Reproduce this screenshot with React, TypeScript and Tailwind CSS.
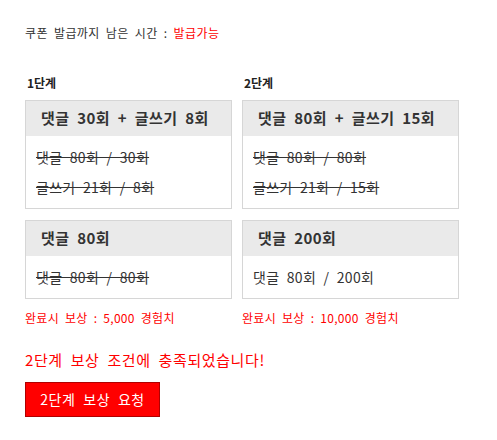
import React from 'react';

type Step = {
  label: string;
  reward: string;
  width: string;
  tasks: { title: string; lines: { text: string; done: boolean }[] }[];
};

const steps: Step[] = [
  {
    label: '1단계',
    reward: '완료시 보상 : 5,000 경험치',
    width: 'w-[207px]',
    tasks: [
      {
        title: '댓글 30회 + 글쓰기 8회',
        lines: [
          { text: '댓글 80회 / 30회', done: true },
          { text: '글쓰기 21회 / 8회', done: true },
        ],
      },
      {
        title: '댓글 80회',
        lines: [{ text: '댓글 80회 / 80회', done: true }],
      },
    ],
  },
  {
    label: '2단계',
    reward: '완료시 보상 : 10,000 경험치',
    width: 'w-[217px]',
    tasks: [
      {
        title: '댓글 80회 + 글쓰기 15회',
        lines: [
          { text: '댓글 80회 / 80회', done: true },
          { text: '글쓰기 21회 / 15회', done: true },
        ],
      },
      {
        title: '댓글 200회',
        lines: [{ text: '댓글 80회 / 200회', done: false }],
      },
    ],
  },
];

export default function App() {
  return (
    <div
      className="min-h-[440px] bg-white pl-[25px] pt-[26px] text-[#333] [word-spacing:3px]"
      style={{ fontFamily: '"Noto Sans CJK KR", "Noto Sans", sans-serif' }}
    >
      <p className="text-[12px] leading-[14px] tracking-[0.4px]">
        쿠폰 발급까지 남은 시간 : <span className="text-[#ff0000]">발급가능</span>
      </p>

      <div className="mt-[36px] flex gap-[10px]">
        {steps.map((step) => (
          <div key={step.label} className={step.width}>
            <div className="pl-[2px] text-[12px] font-bold leading-[14px] text-[#222]">{step.label}</div>
            {step.tasks.map((task, i) => (
              <div
                key={task.title}
                className={`border border-[#d6d6d6] ${i === 0 ? 'mt-[10px]' : 'mt-[11px]'}`}
              >
                <div className="flex h-[35px] items-center bg-[#eaeaea] pl-[15px] text-[15px] font-bold tracking-[0.4px] text-[#333] [word-spacing:4px]">
                  {task.title}
                </div>
                <div className="px-[10px] py-[6px]">
                  {task.lines.map((line) => (
                    <div
                      key={line.text}
                      className={`text-[14px] leading-[30px] tracking-[0.3px] [word-spacing:4px] ${line.done ? 'line-through decoration-[#333]' : ''}`}
                    >
                      {line.text}
                    </div>
                  ))}
                </div>
              </div>
            ))}
            <div className="mt-[12px] text-[12px] leading-[14px] tracking-[0.3px] text-[#ff0000]">{step.reward}</div>
          </div>
        ))}
      </div>

      <p className="mt-[25px] text-[15px] leading-[20px] tracking-[0.6px] text-[#ff0000] [word-spacing:4px]">
        2단계 보상 조건에 충족되었습니다!
      </p>

      <button className="mt-[12px] flex h-[35px] w-[135px] items-center justify-center border border-[#b00000] bg-[#ff0000] text-[14px] tracking-[0.6px] text-white [word-spacing:4px]">
        2단계 보상 요청
      </button>
    </div>
  );
}
